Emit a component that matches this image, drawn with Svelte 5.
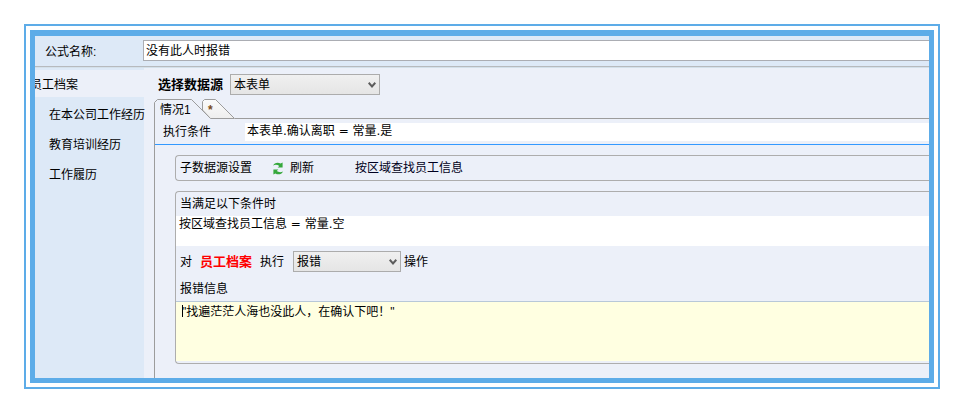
<script>
  let formulaName = $state('没有此人时报错');
  let condition = $state('本表单.确认离职 = 常量.是');
  let filter = $state('按区域查找员工信息 = 常量.空');
  let message = $state('"找遍茫茫人海也没此人，在确认下吧！"');
  let source = $state('本表单');
  let action = $state('报错');
  const children = ['在本公司工作经历', '教育培训经历', '工作履历'];
</script>

{#snippet chevron()}
  <svg class="chevron" width="8" height="6" viewBox="0 0 8 6" aria-hidden="true">
    <path d="M0.7 0.8 L4 4.4 L7.3 0.8" fill="none" stroke="#5c5c5c" stroke-width="2" />
  </svg>
{/snippet}

<div class="page">
  <div class="frame">
    <div class="window">
      <header class="toolbar">
        <label for="formula-name">公式名称:</label>
        <input id="formula-name" type="text" bind:value={formulaName} />
      </header>

      <div class="body">
        <nav class="side">
          <a class="current" href="#root">员工档案</a>
          {#each children as item}
            <a href="#child">{item}</a>
          {/each}
        </nav>

        <main>
          <div class="source">
            <label class="strong" for="source">选择数据源</label>
            <span class="select wide">
              <select id="source" bind:value={source}><option>本表单</option></select>
              {@render chevron()}
            </span>
          </div>

          <div class="tabs">
            <button class="tab active" type="button">
              <svg width="57" height="20" viewBox="0 0 57 20" aria-hidden="true">
                <path d="M0.5 20 V3.5 L3.5 0.5 H37.5 L56.5 19.5 L56 20 Z" fill="#ecf0f9" />
                <path d="M0.5 20 V3.5 L3.5 0.5 H37.5 L56.5 19.5" fill="none" stroke="#9c9c9c" />
              </svg>
              <span>情况1</span>
            </button>
            <button class="tab add" type="button">
              <svg width="33" height="20" viewBox="0 0 33 20" aria-hidden="true">
                <defs>
                  <linearGradient id="tab-fill" x1="0" y1="0" x2="0" y2="1">
                    <stop offset="0" stop-color="#fbfbfb" />
                    <stop offset="1" stop-color="#eeeeee" />
                  </linearGradient>
                </defs>
                <path d="M0.5 11 V2.5 L2.5 0.5 H13.5 L32.5 19.5 H8.5 Z" fill="url(#tab-fill)" stroke="#9c9c9c" />
              </svg>
              <span>*</span>
            </button>
            <div class="rest"></div>
          </div>

          <section class="panel">
            <div class="condition">
              <label for="condition">执行条件</label>
              <input id="condition" class="formula" type="text" bind:value={condition} />
            </div>

            <div class="group sub">
              <span class="subtitle">子数据源设置</span>
              <button class="refresh" type="button">
                <svg width="12" height="13" viewBox="0 0 12 13" aria-hidden="true">
                  <path d="M1 3.6 C2.2 0.8 5.8 -0.2 8.6 1.6 L10.6 0.4 V5.6 H5.6 L7.3 4 C5.4 2.6 3 2.5 1 3.6 Z" fill="#35a83c" />
                  <path d="M11 9.4 C9.8 12.2 6.2 13.2 3.4 11.4 L1.4 12.6 V7.4 H6.4 L4.7 9 C6.6 10.4 9 10.5 11 9.4 Z" fill="#35a83c" />
                </svg>
                刷新
              </button>
              <a class="query" href="#query">按区域查找员工信息</a>
            </div>

            <div class="group rule">
              <label class="caption" for="filter">当满足以下条件时</label>
              <textarea id="filter" class="filter formula" bind:value={filter}></textarea>
              <div class="action">
                <span>对</span>
                <strong>员工档案</strong>
                <label for="action">执行</label>
                <span class="select">
                  <select id="action" bind:value={action}><option>报错</option></select>
                  {@render chevron()}
                </span>
                <span class="after">操作</span>
              </div>
              <label class="caption" for="message">报错信息</label>
              <div class="editor">
                <textarea id="message" class="message" bind:value={message}></textarea>
                <i class="caret"></i>
              </div>
            </div>
          </section>
        </main>
      </div>
    </div>
  </div>
</div>

<style>
  :global(body) {
    background: #fff;
  }
  .page {
    padding: 24px;
    color: #000;
    font: 12px/18px "Liberation Sans", "Noto Sans CJK SC", sans-serif;
  }
  .page * {
    box-sizing: border-box;
  }
  .frame {
    border: 2px solid #5dace8;
    padding: 4px;
  }
  .window {
    border: 5px solid #5dace8;
    border-top-width: 6px;
    background: #ecf0f9;
    overflow: hidden;
  }
  input,
  select,
  textarea,
  button {
    margin: 0;
    color: inherit;
    font: inherit;
    border-radius: 0;
    outline: none;
  }
  a {
    color: inherit;
    text-decoration: none;
  }
  .toolbar {
    display: flex;
    height: 31px;
    padding-top: 4px;
    background: #dde9f7;
    border-bottom: 1px solid #b7babe;
  }
  .toolbar label {
    width: 108px;
    padding-left: 10px;
    line-height: 24px;
  }
  .toolbar input {
    flex: 1;
    min-width: 0;
    height: 21px;
    padding: 0 2px 2px;
    background: #fff;
    border: 1px solid #abadb3;
    border-right: 0;
  }
  .body {
    display: flex;
    border-top: 1px solid #d3e0ea;
  }
  .side {
    flex: none;
    display: flex;
    flex-direction: column;
    width: 109px;
    padding-top: 2px;
    background: #dde9f7;
    white-space: nowrap;
  }
  .side a {
    line-height: 30px;
    padding-left: 14px;
  }
  .side a.current {
    height: 27px;
    margin: 0 0 3px -5px;
    padding-left: 0;
    background: linear-gradient(#ecf0f9, #ecf0f9) 5px 0 no-repeat;
  }
  main {
    flex: 1;
    min-width: 0;
    padding: 6px 0 0 10px;
  }
  .source {
    display: flex;
    align-items: center;
    padding-left: 4px;
  }
  .strong {
    width: 72px;
    font-size: 13px;
    font-weight: bold;
  }
  .select {
    position: relative;
    width: 108px;
    height: 21px;
  }
  .select.wide {
    width: 150px;
  }
  select {
    display: block;
    width: 100%;
    height: 21px;
    padding: 1px 3px 0;
    appearance: none;
    border: 1px solid #acacac;
    background: linear-gradient(#f0f0f0, #e5e5e5);
  }
  .chevron {
    position: absolute;
    right: 4px;
    top: 8px;
    pointer-events: none;
  }
  .tabs {
    display: flex;
    height: 20px;
    margin-top: 4px;
  }
  .tab {
    position: relative;
    flex: none;
    padding: 0;
    border: 0;
    background: none;
    text-align: left;
  }
  .tab svg {
    position: absolute;
    left: 0;
    top: 0;
  }
  .tab span {
    position: relative;
    display: block;
    line-height: 22px;
    padding-left: 6px;
  }
  .tab.active {
    z-index: 1;
    width: 57px;
  }
  .tab.add {
    width: 33px;
    margin-left: -9px;
    color: #7a4a20;
    font-weight: bold;
  }
  .rest {
    flex: 1;
    border-bottom: 1px solid #9c9c9c;
  }
  .panel {
    padding-bottom: 14px;
    border-left: 1px solid #9c9c9c;
  }
  .condition {
    display: flex;
    padding: 4px 0 3px 8px;
    border-bottom: 1px solid #3399ff;
  }
  .condition label {
    width: 82px;
  }
  .condition input {
    flex: 1;
    min-width: 0;
    height: 18px;
    padding: 0 2px 2px;
    border: 0;
    background: #fff;
  }
  .formula {
    font-family: "DejaVu Sans", "Noto Sans CJK SC", sans-serif;
  }
  .group {
    margin: 10px 0 0 20px;
    border: 1px solid #adadad;
    border-right: 0;
    border-radius: 4px 0 0 4px;
  }
  .sub {
    display: flex;
    align-items: center;
    height: 26px;
    padding-left: 4px;
  }
  .subtitle {
    width: 92px;
  }
  .refresh {
    display: flex;
    align-items: center;
    gap: 6px;
    width: 83px;
    padding: 0;
    border: 0;
    background: none;
  }
  .query {
    color: #000020;
  }
  .rule {
    display: flex;
    flex-direction: column;
    padding-bottom: 2px;
  }
  .caption {
    padding-left: 4px;
    line-height: 24px;
  }
  textarea {
    display: block;
    width: 100%;
    border: 0;
    resize: none;
    overflow: hidden;
  }
  .filter {
    height: 30px;
    padding: 0 3px;
    line-height: 16px;
    background: #fff;
  }
  .action {
    display: flex;
    align-items: center;
    height: 31px;
    padding-left: 4px;
  }
  .action strong {
    width: 60px;
    margin-left: 8px;
    color: #f00;
    font-size: 13px;
  }
  .action label {
    width: 33px;
  }
  .after {
    margin-left: 3px;
  }
  .editor {
    position: relative;
    border-top: 1px solid #b8c8d8;
  }
  .message {
    height: 59px;
    padding: 1px 6px;
    background: #ffffe1;
  }
  .caret {
    position: absolute;
    left: 6px;
    top: 3px;
    width: 1px;
    height: 12px;
    background: #000;
  }
</style>
